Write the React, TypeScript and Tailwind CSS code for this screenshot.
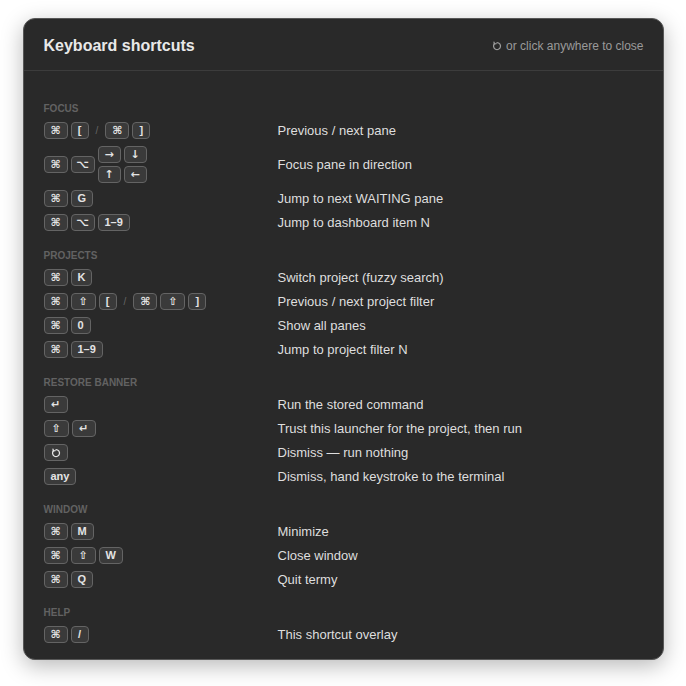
import React from "react";

// Small "escape" glyph (circle with arrow at top-left)
function EscIcon({ className = "" }: { className?: string }) {
  return (
    <svg viewBox="0 0 12 12" className={className} fill="none" stroke="currentColor" strokeWidth="1.5" strokeLinecap="round" strokeLinejoin="round">
      <path d="M6 1.9 A4.2 4.2 0 1 1 2.9 3.3" />
      <path d="M2.4 1.4 L2.9 3.6 L5 3.2" />
    </svg>
  );
}

// One keycap
function K({ children, w }: { children: React.ReactNode; w?: string }) {
  return (
    <span
      className={`inline-flex h-[17px] items-center justify-center rounded-[4px] border border-[#646464] bg-[#3a3a3a] text-[11px] font-bold leading-none text-[#e4e4e4] ${
        w ?? "min-w-[18px] px-[6px]"
      }`}
    >
      {children}
    </span>
  );
}

const sym = "font-['DejaVu_Sans',sans-serif] text-[11px] font-bold";

function Sym({ c, w = "w-[24px]" }: { c: string; w?: string }) {
  return (
    <K w={w}>
      <span className={sym}>{c}</span>
    </K>
  );
}

function Sep() {
  return <span className="px-[4px] text-[10px] text-[#666]">/</span>;
}

const Cmd = () => <Sym c="⌘" />;
const Opt = () => <Sym c="⌥" />;
const Shift = () => <Sym c="⇧" w="w-[25px]" />;
const Enter = () => <Sym c="↵" />;

type Row = { keys: React.ReactNode; desc: string };
type Section = { title: string; rows: Row[] };

const sections: Section[] = [
  {
    title: "FOCUS",
    rows: [
      {
        keys: (
          <>
            <Cmd />
            <K>[</K>
            <Sep />
            <Cmd />
            <K>]</K>
          </>
        ),
        desc: "Previous / next pane",
      },
      {
        keys: (
          <>
            <Cmd />
            <Opt />
            <div className="grid grid-cols-[23px_23px] gap-x-[3px] gap-y-[3px]">
              <Sym c="→" w="w-[23px]" />
              <Sym c="↓" w="w-[23px]" />
              <Sym c="↑" w="w-[23px]" />
              <Sym c="←" w="w-[23px]" />
            </div>
          </>
        ),
        desc: "Focus pane in direction",
      },
      {
        keys: (
          <>
            <Cmd />
            <K>G</K>
          </>
        ),
        desc: "Jump to next WAITING pane",
      },
      {
        keys: (
          <>
            <Cmd />
            <Opt />
            <K>1–9</K>
          </>
        ),
        desc: "Jump to dashboard item N",
      },
    ],
  },
  {
    title: "PROJECTS",
    rows: [
      {
        keys: (
          <>
            <Cmd />
            <K>K</K>
          </>
        ),
        desc: "Switch project (fuzzy search)",
      },
      {
        keys: (
          <>
            <Cmd />
            <Shift />
            <K>[</K>
            <Sep />
            <Cmd />
            <Shift />
            <K>]</K>
          </>
        ),
        desc: "Previous / next project filter",
      },
      {
        keys: (
          <>
            <Cmd />
            <K>0</K>
          </>
        ),
        desc: "Show all panes",
      },
      {
        keys: (
          <>
            <Cmd />
            <K>1–9</K>
          </>
        ),
        desc: "Jump to project filter N",
      },
    ],
  },
  {
    title: "RESTORE BANNER",
    rows: [
      { keys: <Enter />, desc: "Run the stored command" },
      {
        keys: (
          <>
            <Shift />
            <Enter />
          </>
        ),
        desc: "Trust this launcher for the project, then run",
      },
      {
        keys: (
          <K w="w-[24px]">
            <EscIcon className="h-[10px] w-[10px]" />
          </K>
        ),
        desc: "Dismiss — run nothing",
      },
      { keys: <K>any</K>, desc: "Dismiss, hand keystroke to the terminal" },
    ],
  },
  {
    title: "WINDOW",
    rows: [
      {
        keys: (
          <>
            <Cmd />
            <K>M</K>
          </>
        ),
        desc: "Minimize",
      },
      {
        keys: (
          <>
            <Cmd />
            <Shift />
            <K>W</K>
          </>
        ),
        desc: "Close window",
      },
      {
        keys: (
          <>
            <Cmd />
            <K>Q</K>
          </>
        ),
        desc: "Quit termy",
      },
    ],
  },
  {
    title: "HELP",
    rows: [
      {
        keys: (
          <>
            <Cmd />
            <K>/</K>
          </>
        ),
        desc: "This shortcut overlay",
      },
    ],
  },
];

export default function App() {
  return (
    <div className="flex h-[686px] w-[686px] justify-center bg-white pt-[18px] font-['Liberation_Sans',Arial,sans-serif]">
      <div className="h-fit w-[641px] overflow-hidden rounded-[12px] border border-[#575757] bg-[#292929] shadow-[0_6px_22px_rgba(0,0,0,0.28)]">
        {/* header */}
        <div className="flex h-[52px] items-center justify-between border-b border-[#3c3c3c] pl-[20px] pr-[19px] pt-[3px]">
          <h1 className="text-[16px] font-bold text-[#e8e8e8]">Keyboard shortcuts</h1>
          <div className="flex items-center gap-[4px] text-[12px] text-[#9a9a9a]">
            <EscIcon className="h-[10px] w-[10px]" />
            <span>or click anywhere to close</span>
          </div>
        </div>

        {/* body */}
        <div className="flex flex-col gap-[18px] px-[20px] pb-[16px] pt-[31px]">
          {sections.map((s) => (
            <div key={s.title}>
              <div className="mb-[7px] h-[13px] text-[10px] font-bold leading-[13px] text-[#626262]">{s.title}</div>
              <div className="flex flex-col gap-[7px]">
                {s.rows.map((r) => (
                  <div key={r.desc} className="grid grid-cols-[234px_1fr] items-center">
                    <div className="flex items-center gap-[3px]">{r.keys}</div>
                    <div className="text-[13px] leading-[17px] text-[#dedede]">{r.desc}</div>
                  </div>
                ))}
              </div>
            </div>
          ))}
        </div>
      </div>
    </div>
  );
}
